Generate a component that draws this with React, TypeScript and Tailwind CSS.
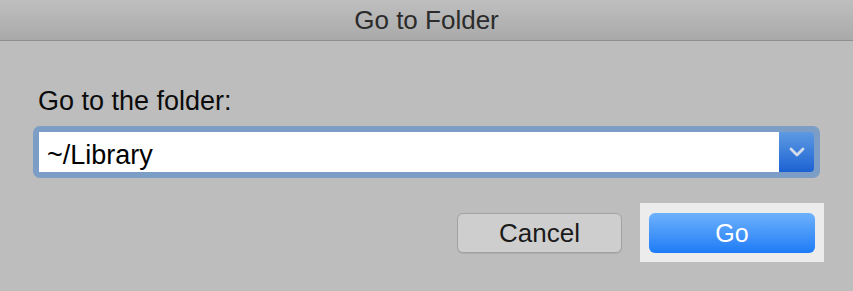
export default function App() {
  return (
    <div className="w-[853px] h-[291px] bg-[#bdbdbd] font-['Liberation_Sans',Arial,sans-serif] overflow-hidden">
      <div className="h-[41px] box-border border-b border-[#8e8e8e] bg-gradient-to-b from-[#bfbfbf] to-[#a9a9a9] flex items-center justify-center">
        <span className="text-[26px] leading-[40px] text-[#2b2b2b]">Go to Folder</span>
      </div>

      <div className="pt-[45px]">
        <div className="pl-[38px] text-[27px] leading-[30px] text-[#0b0b0b]">Go to the folder:</div>

        <div className="mt-[10px] ml-[33px] w-[787px] h-[52px] box-border rounded-[7px] bg-[#7b9dc6] p-[6px]">
          <div className="flex h-[40px]">
            <div className="flex-1 bg-white pl-[8px] pt-[10px] text-[27px] leading-none text-black">~/Library</div>
            <div className="w-[35px] rounded-r-[4px] bg-gradient-to-b from-[#5d9ae3] to-[#1b61d2] flex items-center justify-center">
              <svg width="16" height="10" viewBox="0 0 16 10">
                <path d="M2 2 L8 8 L14 2" fill="none" stroke="#d3dcea" strokeWidth="2.8" strokeLinecap="round" strokeLinejoin="round" />
              </svg>
            </div>
          </div>
        </div>

        <div className="mt-[25px] pr-[29px] flex justify-end items-start gap-[18px]">
          <button className="mt-[10px] w-[165px] h-[40px] box-border rounded-[6px] border border-[#a2a2a2] bg-[#cecece] shadow-[0_1px_0_rgba(0,0,0,0.08)] text-[26px] leading-none text-[#1a1a1a]">
            Cancel
          </button>
          <div className="bg-[#ececec] pt-[10px] pb-[9px] px-[9px]">
            <button className="w-[166px] h-[40px] rounded-[6px] bg-gradient-to-b from-[#6cb1fb] to-[#1a7bf7] text-[25px] leading-none text-white">
              Go
            </button>
          </div>
        </div>
      </div>
    </div>
  );
}
